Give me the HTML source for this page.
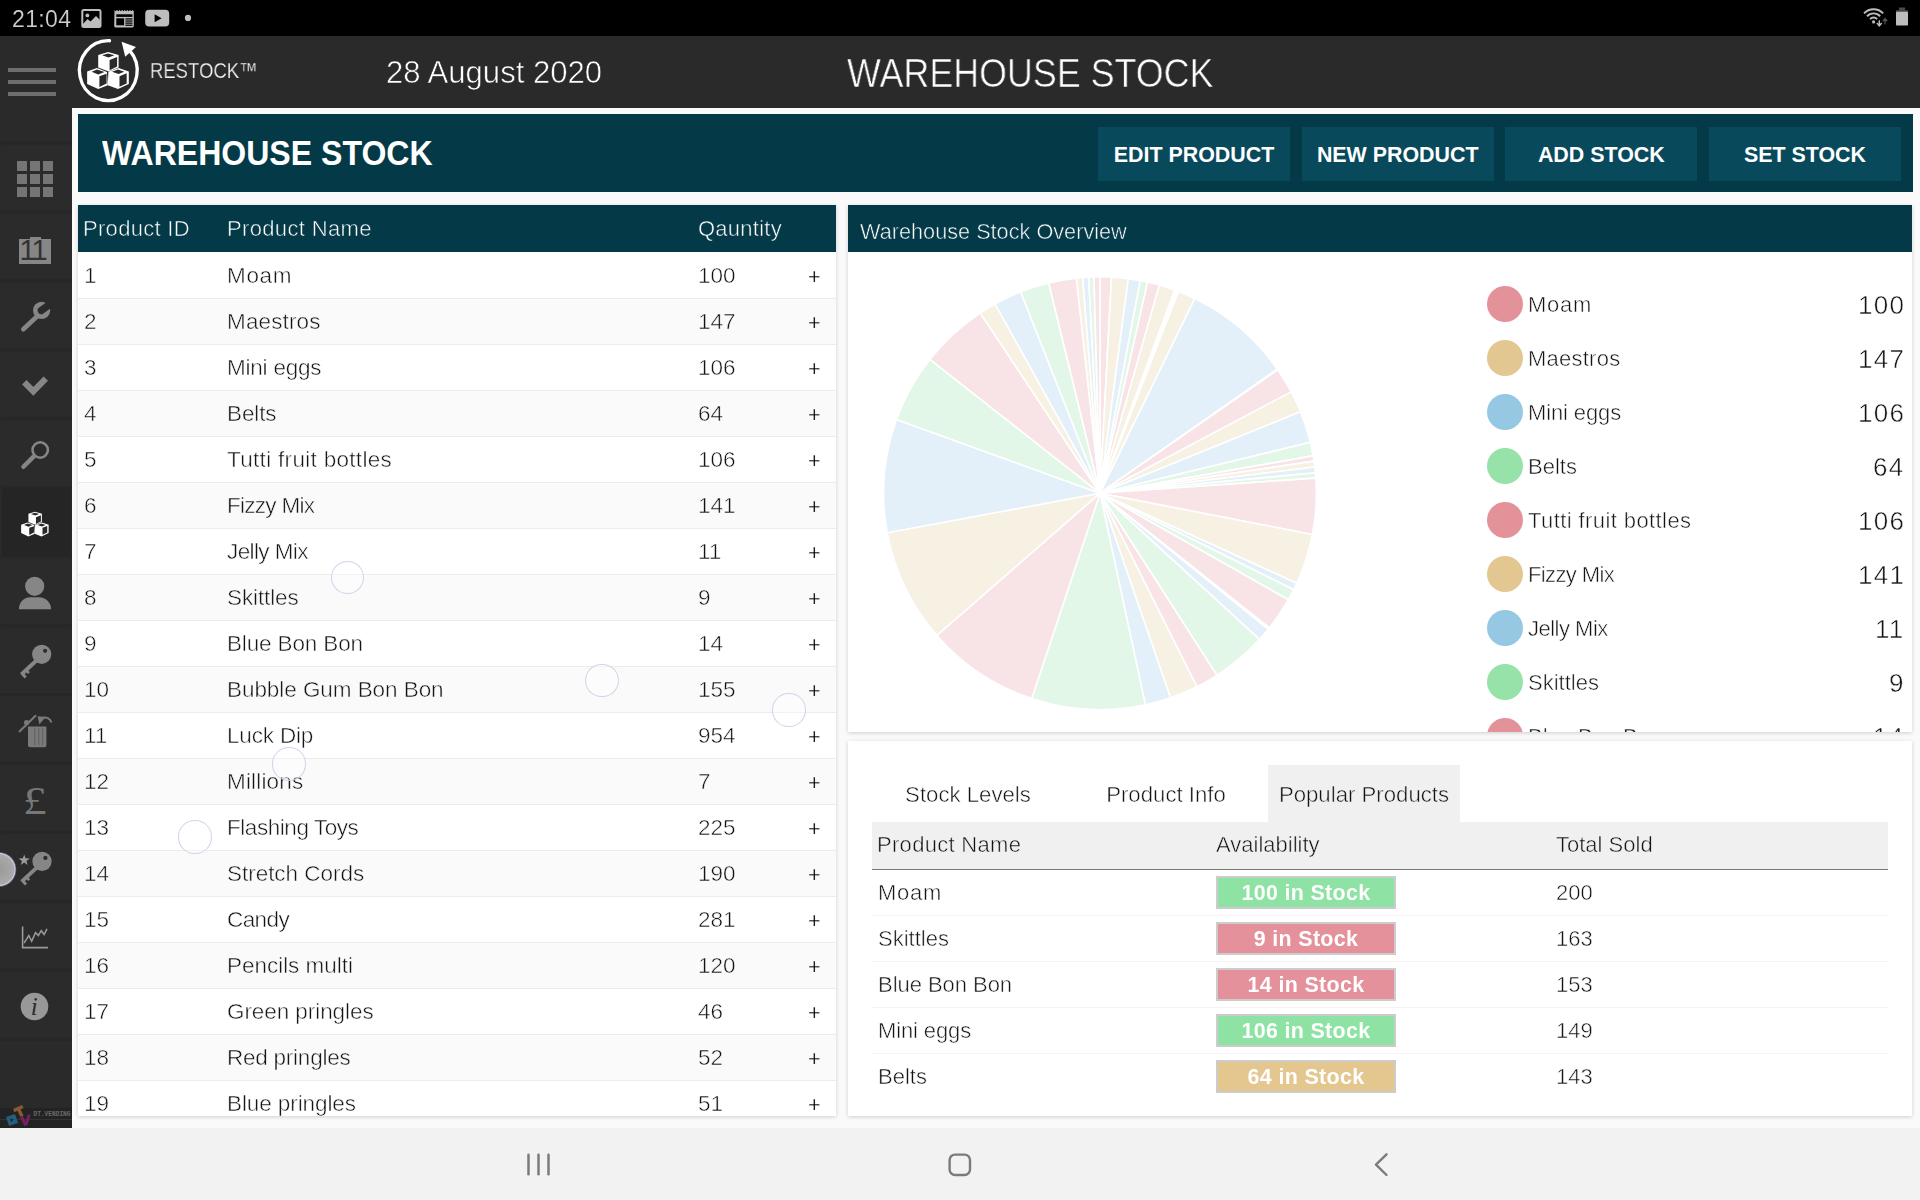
<!DOCTYPE html>
<html lang="en">
<head>
<meta charset="utf-8">
<title>RESTOCK - Warehouse Stock</title>
<style>
*{box-sizing:border-box;margin:0;padding:0}
html,body{width:1920px;height:1200px;overflow:hidden;background:#fafafa;font-family:"Liberation Sans",sans-serif;color:#484848}
.abs{position:absolute}
#statusbar{position:absolute;left:0;top:0;width:1920px;height:36px;background:#000;color:#cfcfcf}
#statusbar .time{position:absolute;left:11.7px;top:5.6px;font-size:23px;line-height:26px;letter-spacing:.35px}
#header{position:absolute;left:0;top:36px;width:1920px;height:72px;background:#2a2a2a;color:#fff}
#sidebar{position:absolute;left:0;top:108px;width:72px;height:1020px;background:#2a2a2a}
#navbar{position:absolute;left:0;top:1128px;width:1920px;height:72px;background:#f2f2f2}
#brand{position:absolute;left:150px;top:22.7px;font-size:21.5px;line-height:24px;color:#f4f4f4;transform-origin:0 50%;transform:scaleX(.86);white-space:nowrap}
#date{position:absolute;left:386px;top:19px;font-size:31.1px;line-height:36px;color:#fff;white-space:nowrap}
#htitle{position:absolute;left:847px;top:13.8px;font-size:40.5px;line-height:46px;color:#fff;transform-origin:0 50%;transform:scaleX(.885);white-space:nowrap}
#titlebar{position:absolute;left:78px;top:114px;width:1835px;height:78px;background:#043a48;color:#fff}
#titlebar h1{position:absolute;left:24px;top:19px;font-size:35.3px;line-height:40px;font-weight:bold;transform-origin:0 50%;transform:scaleX(.908);white-space:nowrap}
.btn{position:absolute;top:13px;width:192px;height:54px;background:#084a5b;color:#fff;font-weight:bold;font-size:21.4px;line-height:56px;text-align:center}
.panel{position:absolute;background:#fff;box-shadow:0 1px 4px rgba(0,0,0,.18);overflow:hidden}
.phead{position:absolute;left:0;top:0;width:100%;height:47px;background:#043a48;color:#fff;font-size:22px}
#stock .row{position:absolute;left:0;width:758px;height:46px;border-bottom:1px solid #ececec;font-size:22.5px;line-height:45px;margin-top:1px}
#stock .row.alt{background:#fafafa}
#stock .row span{position:absolute;top:0;white-space:nowrap}
.c1{left:6px}.c2{left:149.2px}.c3{left:620px}.c4{left:730.3px;color:#111;font-size:21.5px;margin-top:2px}
.phead span{position:absolute;white-space:nowrap;line-height:47px}

.lg{position:absolute;left:638.7px;width:420px;height:54px;font-size:22px;line-height:56px}
.lg i{position:absolute;left:0;top:9px;width:36px;height:36px;border-radius:50%}
.lg .ln{position:absolute;left:41.2px;top:0;white-space:nowrap}
.lg .lv{position:absolute;right:1.8px;top:0;font-size:26px;letter-spacing:1.3px}
.tab{position:absolute;top:24px;height:57px;line-height:59px;text-align:center;font-size:22.2px;white-space:nowrap}
.tab.act{background:#f0f0f0}
.thead{position:absolute;left:24px;top:81px;width:1016px;height:48px;background:#f0f0f0;border-bottom:1.5px solid #777;font-size:22px;line-height:46px}
.thead span{position:absolute;top:0;white-space:nowrap}
.prow{position:absolute;left:24px;width:1016px;height:46px;border-bottom:1px solid #f3f3f3;font-size:22px;line-height:45px}
.prow:last-child{border-bottom:none}
.prow span{position:absolute;top:0;white-space:nowrap}
.pn{left:5.6px}.ps{left:684px}
.badge{left:344px;top:6px !important;width:180px;height:33px;border:2px solid #ccc;color:#fff;font-weight:bold;font-size:21.4px;letter-spacing:.35px;line-height:31px;text-align:center}
.badge.g{background:#8ee2a4}.badge.r{background:#e4919b}.badge.t{background:#e4c78f}
.rip{position:absolute;width:33.4px;height:33.4px;border-radius:50%;border:1.6px solid rgba(200,205,232,.85);background:rgba(255,255,255,.35)}
.cal1{position:absolute;top:127px;font-size:29px;line-height:30px;color:#333}
#stock .row,.lg,.prow,.thead,.tab{-webkit-text-stroke:.5px #fff;color:#141414}
#stock .row.alt{-webkit-text-stroke-color:#fafafa}
.thead,.tab.act{-webkit-text-stroke-color:#f0f0f0}
.badge{-webkit-text-stroke:0}
#stock .row .c4{-webkit-text-stroke:.25px #fff;color:#000}
#stock .row span,.lg span,.prow span,.thead span,.tab{will-change:transform}
#date,#htitle{-webkit-text-stroke:.6px #2a2a2a;will-change:transform}
#brand{-webkit-text-stroke:.25px #2a2a2a;will-change:transform}
.phead span{-webkit-text-stroke:.55px #043a48;will-change:transform}
#statusbar .time{-webkit-text-stroke:.15px #000;will-change:transform}
</style>
</head>
<body>
<div id="statusbar"><span class="time">21:04</span></div>
<div id="header">
  <div id="brand">RESTOCK™</div>
  <div id="date">28 August 2020</div>
  <div id="htitle">WAREHOUSE STOCK</div>
</div>
<div id="sidebar"><svg class="abs" style="left:0;top:0" width="72" height="1020" viewBox="0 108 72 1020">
<rect x="2" y="144.50" width="69" height="65.94" fill="#2b2b2b"/>
<rect x="0" y="141.50" width="72" height="3" fill="#272727"/>
<rect x="2" y="213.44" width="69" height="65.94" fill="#2b2b2b"/>
<rect x="0" y="210.44" width="72" height="3" fill="#272727"/>
<rect x="2" y="282.38" width="69" height="65.94" fill="#2b2b2b"/>
<rect x="0" y="279.38" width="72" height="3" fill="#272727"/>
<rect x="2" y="351.32" width="69" height="65.94" fill="#2b2b2b"/>
<rect x="0" y="348.32" width="72" height="3" fill="#272727"/>
<rect x="2" y="420.26" width="69" height="65.94" fill="#2b2b2b"/>
<rect x="0" y="417.26" width="72" height="3" fill="#272727"/>
<rect x="2" y="489.20" width="69" height="65.94" fill="#252525"/>
<rect x="0" y="486.20" width="72" height="3" fill="#272727"/>
<rect x="2" y="558.14" width="69" height="65.94" fill="#2b2b2b"/>
<rect x="0" y="555.14" width="72" height="3" fill="#272727"/>
<rect x="2" y="627.08" width="69" height="65.94" fill="#2b2b2b"/>
<rect x="0" y="624.08" width="72" height="3" fill="#272727"/>
<rect x="2" y="696.02" width="69" height="65.94" fill="#2b2b2b"/>
<rect x="0" y="693.02" width="72" height="3" fill="#272727"/>
<rect x="2" y="764.96" width="69" height="65.94" fill="#2b2b2b"/>
<rect x="0" y="761.96" width="72" height="3" fill="#272727"/>
<rect x="2" y="833.90" width="69" height="65.94" fill="#2b2b2b"/>
<rect x="0" y="830.90" width="72" height="3" fill="#272727"/>
<rect x="2" y="902.84" width="69" height="65.94" fill="#2b2b2b"/>
<rect x="0" y="899.84" width="72" height="3" fill="#272727"/>
<rect x="2" y="971.78" width="69" height="65.94" fill="#2b2b2b"/>
<rect x="0" y="968.78" width="72" height="3" fill="#272727"/>
<rect x="0" y="1037.72" width="72" height="3" fill="#272727"/>
<rect x="17" y="161" width="10" height="10" fill="#757575"/>
<rect x="30" y="161" width="10" height="10" fill="#757575"/>
<rect x="43" y="161" width="10" height="10" fill="#757575"/>
<rect x="17" y="174" width="10" height="10" fill="#757575"/>
<rect x="30" y="174" width="10" height="10" fill="#757575"/>
<rect x="43" y="174" width="10" height="10" fill="#757575"/>
<rect x="17" y="187" width="10" height="10" fill="#757575"/>
<rect x="30" y="187" width="10" height="10" fill="#757575"/>
<rect x="43" y="187" width="10" height="10" fill="#757575"/>
<rect x="19" y="239" width="32" height="25" fill="#868686"/><rect x="30" y="237" width="11" height="3" fill="#868686"/>
<g fill="#868686" stroke="#868686"><line x1="23.3" y1="329.2" x2="37.5" y2="316" stroke-width="4.6" stroke-linecap="round"/><circle cx="41.6" cy="310.3" r="8.6" stroke="none"/></g>
<path d="M41.2 -3.6h12v7.2h-12a3.6 3.6 0 0 1 0-7.2z" fill="#2b2b2b" transform="translate(41.6 310.3) rotate(-36) translate(-41.6 0)"/>
<polyline points="24.3,382.3 33.3,391.3 45.8,378.6" fill="none" stroke="#868686" stroke-width="6.2"/>
<circle cx="40.2" cy="450" r="7.7" fill="none" stroke="#868686" stroke-width="2.6"/><line x1="33.6" y1="456.6" x2="23.4" y2="466.8" stroke="#868686" stroke-width="4.4" stroke-linecap="round"/>
<g transform="translate(34.9 524.1) scale(0.66) translate(-108 -70.5)"><use href="#cubes"/></g>
<circle cx="34.7" cy="586.3" r="9.6" fill="#868686"/><path d="M18.9 609.2c0-7 5-12 11-12h9.5c6 0 11.7 5 11.7 12z" fill="#868686"/>
<g transform="translate(41.7 654.3)"><circle cx="0" cy="0" r="9.6" fill="#868686"/><circle cx="3.4" cy="-3.5" r="2.1" fill="#2c2c2c"/><line x1="-5" y1="6" x2="-20.3" y2="20.2" stroke="#868686" stroke-width="4"/><line x1="-19.6" y1="19.2" x2="-16" y2="23.2" stroke="#868686" stroke-width="3"/><line x1="-15.6" y1="15.6" x2="-12.8" y2="18.8" stroke="#868686" stroke-width="2.6"/></g>
<path d="M28 726.5h18.4v18.7a2 2 0 0 1-2 2h-14.4a2 2 0 0 1-2-2z" fill="#7a7a7a"/>
<rect x="34.2" y="728" width="1.2" height="17" fill="#636363"/>
<rect x="38.2" y="728" width="1.2" height="17" fill="#636363"/>
<rect x="42" y="728" width="1.2" height="17" fill="#636363"/>
<line x1="19" y1="732" x2="36" y2="715.2" stroke="#7a7a7a" stroke-width="2"/><circle cx="26.6" cy="722.6" r="2.6" fill="#7a7a7a"/>
<path d="M51.4 722.5c-1.2-4.2-5-6-9.5-4.6" fill="none" stroke="#7a7a7a" stroke-width="2"/><path d="M37.6 716.2l8 .8-6.2 7.6z" fill="#7a7a7a"/>
<text x="0" y="0" text-anchor="middle" transform="translate(34.9 813.5) scale(1.18 1.02)" style="font-family:Liberation Serif,serif;font-size:40px" fill="#777">£</text>
<g transform="translate(42.0 861.4)"><circle cx="0" cy="0" r="9.6" fill="#868686"/><circle cx="3.4" cy="-3.5" r="2.1" fill="#2c2c2c"/><line x1="-5" y1="6" x2="-20.3" y2="20.2" stroke="#868686" stroke-width="4"/><line x1="-19.6" y1="19.2" x2="-16" y2="23.2" stroke="#868686" stroke-width="3"/><line x1="-15.6" y1="15.6" x2="-12.8" y2="18.8" stroke="#868686" stroke-width="2.6"/></g>
<polygon points="24.20,854.40 25.61,858.26 29.72,858.41 26.48,860.94 27.61,864.89 24.20,862.60 20.79,864.89 21.92,860.94 18.68,858.41 22.79,858.26" fill="#9a9a9a"/>
<polyline points="22.6,926.5 22.6,947.6 48,947.6" fill="none" stroke="#9a9a9a" stroke-width="1.6"/>
<polyline points="24,943.2 28.8,935.5 31.7,941.3 35.5,932.6 38.4,935.5 41.3,930.7 44.1,934.5 47,928.8" fill="none" stroke="#9a9a9a" stroke-width="1.5"/>
<circle cx="34.5" cy="1006.5" r="13.8" fill="#989898"/>
<text x="34.3" y="1014.5" text-anchor="middle" style="font-family:Liberation Serif,serif;font-style:italic;font-size:25px" fill="#2a2a2a">i</text>
<rect x="0" y="1108" width="72" height="20" fill="#232323"/><rect x="0" y="1119" width="72" height="1" fill="#333"/>
<path d="M6 1117l9-3 3 9-9 3z" fill="#23607e"/><path d="M10 1118.5l4 .8-3 3z" fill="#2a2a2a"/>
<path d="M13 1109l9-4 1.6 3-3 1.4 3 6-3.2 1.4-3-6-3 1.4z" fill="#8a5a2c"/>
<path d="M20 1117l3-1 2.6 6 2-7 3-1-3 11-3.4 1z" fill="#7a1f63"/>
<text x="33.5" y="1115.6" style="font-family:Liberation Mono,monospace;font-weight:bold;font-size:6.6px" fill="#6a6a6a" textLength="37" lengthAdjust="spacingAndGlyphs">DT.VENDING</text>
<defs><radialGradient id="blob" cx="50%" cy="50%" r="50%"><stop offset="0" stop-color="#9a9a9a"/><stop offset="0.82" stop-color="#aaaaaa"/><stop offset="0.9" stop-color="#c9cde6"/><stop offset="1" stop-color="#3a3d55" stop-opacity="0"/></radialGradient></defs>
<circle cx="-1" cy="869.5" r="18" fill="url(#blob)"/>
</svg>
<span class="cal1" style="left:19.6px">1</span><span class="cal1" style="left:31.4px">1</span></div>
<div id="titlebar">
  <h1>WAREHOUSE STOCK</h1>
  <div class="btn" style="left:1020px">EDIT PRODUCT</div>
  <div class="btn" style="left:1223.7px">NEW PRODUCT</div>
  <div class="btn" style="left:1427.3px">ADD STOCK</div>
  <div class="btn" style="left:1631px">SET STOCK</div>
</div>
<div id="stock" class="panel" style="left:78px;top:205px;width:758px;height:911px">
  <div class="phead"><span style="left:4.8px;letter-spacing:.3px">Product ID</span><span style="left:148.6px;letter-spacing:.35px">Product Name</span><span style="left:619.6px;letter-spacing:.25px">Qauntity</span></div>
  <div class="row" style="top:47px"><span class="c1">1</span><span class="c2" style="letter-spacing:0.67px">Moam</span><span class="c3">100</span><span class="c4">+</span></div>
  <div class="row alt" style="top:93px"><span class="c1">2</span><span class="c2" style="letter-spacing:0.14px">Maestros</span><span class="c3">147</span><span class="c4">+</span></div>
  <div class="row" style="top:139px"><span class="c1">3</span><span class="c2" style="letter-spacing:-0.22px">Mini eggs</span><span class="c3">106</span><span class="c4">+</span></div>
  <div class="row alt" style="top:185px"><span class="c1">4</span><span class="c2" style="letter-spacing:-0.10px">Belts</span><span class="c3">64</span><span class="c4">+</span></div>
  <div class="row" style="top:231px"><span class="c1">5</span><span class="c2" style="letter-spacing:0.31px">Tutti fruit bottles</span><span class="c3">106</span><span class="c4">+</span></div>
  <div class="row alt" style="top:277px"><span class="c1">6</span><span class="c2" style="letter-spacing:-0.72px">Fizzy Mix</span><span class="c3">141</span><span class="c4">+</span></div>
  <div class="row" style="top:323px"><span class="c1">7</span><span class="c2" style="letter-spacing:-0.60px">Jelly Mix</span><span class="c3">11</span><span class="c4">+</span></div>
  <div class="row alt" style="top:369px"><span class="c1">8</span><span class="c2" style="letter-spacing:-0.11px">Skittles</span><span class="c3">9</span><span class="c4">+</span></div>
  <div class="row" style="top:415px"><span class="c1">9</span><span class="c2" style="letter-spacing:-0.14px">Blue Bon Bon</span><span class="c3">14</span><span class="c4">+</span></div>
  <div class="row alt" style="top:461px"><span class="c1">10</span><span class="c2" style="letter-spacing:-0.06px">Bubble Gum Bon Bon</span><span class="c3">155</span><span class="c4">+</span></div>
  <div class="row" style="top:507px"><span class="c1">11</span><span class="c2" style="letter-spacing:-0.17px">Luck Dip</span><span class="c3">954</span><span class="c4">+</span></div>
  <div class="row alt" style="top:553px"><span class="c1">12</span><span class="c2" style="letter-spacing:0.17px">Millions</span><span class="c3">7</span><span class="c4">+</span></div>
  <div class="row" style="top:599px"><span class="c1">13</span><span class="c2" style="letter-spacing:-0.45px">Flashing Toys</span><span class="c3">225</span><span class="c4">+</span></div>
  <div class="row alt" style="top:645px"><span class="c1">14</span><span class="c2" style="letter-spacing:-0.03px">Stretch Cords</span><span class="c3">190</span><span class="c4">+</span></div>
  <div class="row" style="top:691px"><span class="c1">15</span><span class="c2" style="letter-spacing:-0.60px">Candy</span><span class="c3">281</span><span class="c4">+</span></div>
  <div class="row alt" style="top:737px"><span class="c1">16</span><span class="c2" style="letter-spacing:-0.03px">Pencils multi</span><span class="c3">120</span><span class="c4">+</span></div>
  <div class="row" style="top:783px"><span class="c1">17</span><span class="c2" style="letter-spacing:-0.07px">Green pringles</span><span class="c3">46</span><span class="c4">+</span></div>
  <div class="row alt" style="top:829px"><span class="c1">18</span><span class="c2" style="letter-spacing:-0.24px">Red pringles</span><span class="c3">52</span><span class="c4">+</span></div>
  <div class="row" style="top:875px"><span class="c1">19</span><span class="c2" style="letter-spacing:-0.09px">Blue pringles</span><span class="c3">51</span><span class="c4">+</span></div>
</div>
<div id="overview" class="panel" style="left:848px;top:205px;width:1064px;height:527px">
  <div class="phead"><span style="left:12px;top:3px;font-size:21.7px">Warehouse Stock Overview</span></div>
  <svg class="abs" style="left:0;top:47px" width="520" height="479" viewBox="0 47 520 479"><g stroke="#fff" stroke-width="1.6" stroke-linejoin="bevel"><path d="M252.0 288.2L252.00 71.80A216 216 0 0 1 263.49 72.11Z" fill="#f8e3e6"/><path d="M252.0 288.2L263.49 72.11A216 216 0 0 1 280.32 73.66Z" fill="#f7f1e3"/><path d="M252.0 288.2L280.32 73.66A216 216 0 0 1 292.35 75.60Z" fill="#e3f0f9"/><path d="M252.0 288.2L292.35 75.60A216 216 0 0 1 299.56 77.09Z" fill="#e3f7e8"/><path d="M252.0 288.2L299.56 77.09A216 216 0 0 1 311.37 80.10Z" fill="#f8e3e6"/><path d="M252.0 288.2L311.37 80.10A216 216 0 0 1 326.77 85.13Z" fill="#f7f1e3"/><path d="M252.0 288.2L326.77 85.13A216 216 0 0 1 327.96 85.57Z" fill="#e3f0f9"/><path d="M252.0 288.2L327.96 85.57A216 216 0 0 1 328.93 85.94Z" fill="#e3f7e8"/><path d="M252.0 288.2L328.93 85.94A216 216 0 0 1 330.43 86.51Z" fill="#f8e3e6"/><path d="M252.0 288.2L330.43 86.51A216 216 0 0 1 346.76 93.65Z" fill="#f7f1e3"/><path d="M252.0 288.2L346.76 93.65A216 216 0 0 1 429.29 164.12Z" fill="#e3f0f9"/><path d="M252.0 288.2L429.29 164.12A216 216 0 0 1 429.75 164.78Z" fill="#e3f7e8"/><path d="M252.0 288.2L429.75 164.78A216 216 0 0 1 443.20 186.86Z" fill="#f8e3e6"/><path d="M252.0 288.2L443.20 186.86A216 216 0 0 1 452.44 206.64Z" fill="#f7f1e3"/><path d="M252.0 288.2L452.44 206.64A216 216 0 0 1 462.35 237.37Z" fill="#e3f0f9"/><path d="M252.0 288.2L462.35 237.37A216 216 0 0 1 465.16 250.87Z" fill="#e3f7e8"/><path d="M252.0 288.2L465.16 250.87A216 216 0 0 1 466.01 256.09Z" fill="#f8e3e6"/><path d="M252.0 288.2L466.01 256.09A216 216 0 0 1 466.81 262.02Z" fill="#f7f1e3"/><path d="M252.0 288.2L466.81 262.02A216 216 0 0 1 467.44 267.85Z" fill="#e3f0f9"/><path d="M252.0 288.2L467.44 267.85A216 216 0 0 1 467.87 273.10Z" fill="#e3f7e8"/><path d="M252.0 288.2L467.87 273.10A216 216 0 0 1 464.42 329.49Z" fill="#f8e3e6"/><path d="M252.0 288.2L464.42 329.49A216 216 0 0 1 448.76 378.28Z" fill="#f7f1e3"/><path d="M252.0 288.2L448.76 378.28A216 216 0 0 1 445.66 384.76Z" fill="#e3f0f9"/><path d="M252.0 288.2L445.66 384.76A216 216 0 0 1 440.34 394.76Z" fill="#e3f7e8"/><path d="M252.0 288.2L440.34 394.76A216 216 0 0 1 421.36 422.91Z" fill="#f8e3e6"/><path d="M252.0 288.2L421.36 422.91A216 216 0 0 1 420.17 424.38Z" fill="#f7f1e3"/><path d="M252.0 288.2L420.17 424.38A216 216 0 0 1 411.55 434.40Z" fill="#e3f0f9"/><path d="M252.0 288.2L411.55 434.40A216 216 0 0 1 368.91 470.30Z" fill="#e3f7e8"/><path d="M252.0 288.2L368.91 470.30A216 216 0 0 1 348.90 481.69Z" fill="#f8e3e6"/><path d="M252.0 288.2L348.90 481.69A216 216 0 0 1 322.45 492.81Z" fill="#f7f1e3"/><path d="M252.0 288.2L322.45 492.81A216 216 0 0 1 297.36 499.79Z" fill="#e3f0f9"/><path d="M252.0 288.2L297.36 499.79A216 216 0 0 1 183.69 493.54Z" fill="#e3f7e8"/><path d="M252.0 288.2L183.69 493.54A216 216 0 0 1 88.93 430.46Z" fill="#f8e3e6"/><path d="M252.0 288.2L88.93 430.46A216 216 0 0 1 39.26 327.82Z" fill="#f7f1e3"/><path d="M252.0 288.2L39.26 327.82A216 216 0 0 1 48.52 214.54Z" fill="#e3f0f9"/><path d="M252.0 288.2L48.52 214.54A216 216 0 0 1 81.94 154.38Z" fill="#e3f7e8"/><path d="M252.0 288.2L81.94 154.38A216 216 0 0 1 132.25 107.96Z" fill="#f8e3e6"/><path d="M252.0 288.2L132.25 107.96A216 216 0 0 1 147.09 98.93Z" fill="#f7f1e3"/><path d="M252.0 288.2L147.09 98.93A216 216 0 0 1 172.69 86.86Z" fill="#e3f0f9"/><path d="M252.0 288.2L172.69 86.86A216 216 0 0 1 200.75 77.96Z" fill="#e3f7e8"/><path d="M252.0 288.2L200.75 77.96A216 216 0 0 1 228.44 73.09Z" fill="#f8e3e6"/><path d="M252.0 288.2L228.44 73.09A216 216 0 0 1 234.64 72.50Z" fill="#f7f1e3"/><path d="M252.0 288.2L234.64 72.50A216 216 0 0 1 240.67 72.10Z" fill="#e3f0f9"/><path d="M252.0 288.2L240.67 72.10A216 216 0 0 1 245.96 71.88Z" fill="#e3f7e8"/><path d="M252.0 288.2L245.96 71.88A216 216 0 0 1 252.00 71.80Z" fill="#f8e3e6"/></g></svg>
  <div class="lg" style="top:72px"><i style="background:#e4929a"></i><span class="ln" style="letter-spacing:0.77px">Moam</span><span class="lv">100</span></div>
  <div class="lg" style="top:126px"><i style="background:#e2c791"></i><span class="ln" style="letter-spacing:0.24px">Maestros</span><span class="lv">147</span></div>
  <div class="lg" style="top:180px"><i style="background:#96c8e4"></i><span class="ln" style="letter-spacing:-0.12px">Mini eggs</span><span class="lv">106</span></div>
  <div class="lg" style="top:234px"><i style="background:#96e2a8"></i><span class="ln">Belts</span><span class="lv">64</span></div>
  <div class="lg" style="top:288px"><i style="background:#e4929a"></i><span class="ln" style="letter-spacing:0.41px">Tutti fruit bottles</span><span class="lv">106</span></div>
  <div class="lg" style="top:342px"><i style="background:#e2c791"></i><span class="ln" style="letter-spacing:-0.62px">Fizzy Mix</span><span class="lv">141</span></div>
  <div class="lg" style="top:396px"><i style="background:#96c8e4"></i><span class="ln" style="letter-spacing:-0.50px">Jelly Mix</span><span class="lv">11</span></div>
  <div class="lg" style="top:450px"><i style="background:#96e2a8"></i><span class="ln">Skittles</span><span class="lv">9</span></div>
  <div class="lg" style="top:504px"><i style="background:#e4929a"></i><span class="ln" style="letter-spacing:-0.04px">Blue Bon Bon</span><span class="lv">14</span></div>
</div>
<div id="popular" class="panel" style="left:848px;top:741px;width:1064px;height:375px">
  <div class="tab" style="left:24px;width:192px">Stock Levels</div>
  <div class="tab" style="left:222px;width:192px">Product Info</div>
  <div class="tab act" style="left:420px;width:192px">Popular Products</div>
  <div class="thead"><span style="left:5.4px;letter-spacing:.3px">Product Name</span><span style="left:344px">Availability</span><span style="left:684px">Total Sold</span></div>
  <div class="prow" style="top:129px"><span class="pn" style="letter-spacing:0.77px">Moam</span><span class="badge g">100 in Stock</span><span class="ps">200</span></div>
  <div class="prow" style="top:175px"><span class="pn">Skittles</span><span class="badge r">9 in Stock</span><span class="ps">163</span></div>
  <div class="prow" style="top:221px"><span class="pn" style="letter-spacing:-0.04px">Blue Bon Bon</span><span class="badge r">14 in Stock</span><span class="ps">153</span></div>
  <div class="prow" style="top:267px"><span class="pn" style="letter-spacing:-0.12px">Mini eggs</span><span class="badge g">106 in Stock</span><span class="ps">149</span></div>
  <div class="prow" style="top:313px"><span class="pn">Belts</span><span class="badge t">64 in Stock</span><span class="ps">143</span></div>
</div>
<div id="navbar"></div>
<svg class="abs" style="left:0;top:0" width="1920" height="108" viewBox="0 0 1920 108">
<defs><g id="cubes">
<polygon points="98.2,54.9 108.1,51.9 118.6,54.9 118.6,67.5 108.7,71.4 98.2,67.5" fill="#fff"/><polygon points="102.1,55.2 108.1,53.4 114.4,55.2 108.4,57.6" fill="#2a2a2a"/><polygon points="109.6,60.0 117.1,57.0 117.1,66.6 109.6,70.2" fill="#2a2a2a"/>
<polygon points="87.1,71.4 97.0,68.1 106.9,72.0 107.8,85.2 98.2,89.1 87.1,84.0" fill="#fff"/><polygon points="91.6,71.7 97.0,69.6 104.5,72.0 98.2,74.4" fill="#2a2a2a"/><polygon points="99.4,76.2 106.6,73.8 106.6,83.4 99.4,87.0" fill="#2a2a2a"/>
<polygon points="108.4,71.7 118.6,68.1 128.8,71.4 128.8,84.0 118.0,89.1 107.8,85.2" fill="#fff"/><polygon points="112.0,71.7 118.0,69.6 124.3,71.7 118.6,74.1" fill="#2a2a2a"/><polygon points="119.5,76.2 126.7,73.2 126.7,83.4 119.5,86.7" fill="#2a2a2a"/>
</g></defs>
<rect x="82.3" y="10.1" width="18.2" height="17" rx="1.5" fill="none" stroke="#bdbdbd" stroke-width="2"/>
<path d="M83 24l4.5-5 3 2.6 5.5-5.6 4 4v6.5h-17z" fill="#bdbdbd"/><circle cx="87.4" cy="15.4" r="1.9" fill="#bdbdbd"/>
<path d="M114.5 10l1.2 1.2 1.3-1.2 1.3 1.2 1.3-1.2 1.3 1.2 1.3-1.2 1.3 1.2 1.3-1.2 1.3 1.2 1.3-1.2 1.3 1.2 1.3-1.2 1.3 1.2 1.3-1.2 1.2 1.2V26a1.4 1.4 0 0 1-1.4 1.4h-16.8a1.4 1.4 0 0 1-1.4-1.4z" fill="#bdbdbd"/>
<rect x="116.3" y="14.3" width="16.2" height="2.6" fill="#000"/><rect x="116.3" y="18.3" width="7.8" height="7" fill="#000"/>
<rect x="125.4" y="18.3" width="7.1" height="1.25" fill="#000"/>
<rect x="125.4" y="20.4" width="7.1" height="1.25" fill="#000"/>
<rect x="125.4" y="22.5" width="7.1" height="1.25" fill="#000"/>
<rect x="125.4" y="24.6" width="7.1" height="1.25" fill="#000"/>
<rect x="145.2" y="9.8" width="24" height="16.8" rx="4" fill="#bdbdbd"/><path d="M154.6 14.2l7 4-7 4z" fill="#000"/>
<circle cx="188" cy="17.9" r="3.1" fill="#bdbdbd"/>
<path d="M1870.02 19.06A4.9 4.9 0 0 1 1877.18 19.06" fill="none" stroke="#bdbdbd" stroke-width="1.9"/>
<path d="M1867.02 16.26A9.0 9.0 0 0 1 1880.18 16.26" fill="none" stroke="#bdbdbd" stroke-width="1.9"/>
<path d="M1864.02 13.47A13.1 13.1 0 0 1 1883.18 13.47" fill="none" stroke="#bdbdbd" stroke-width="1.9"/>
<circle cx="1873.6" cy="21.9" r="1.6" fill="#bdbdbd"/>
<path d="M1879.3 20.2v5.4m-2.4-2.6l2.4 2.8 2.4-2.8" fill="none" stroke="#bdbdbd" stroke-width="1.4"/>
<path d="M1885 24.6v-4h-1.8l1.8-2.2 1.8 2.2h-1.8" fill="#555" stroke="#555" stroke-width="1.1"/>
<rect x="1899" y="7.5" width="6" height="3" fill="#4a4a4a"/><rect x="1896" y="10.2" width="12" height="1.8" fill="#4a4a4a"/><rect x="1896" y="11.8" width="12" height="13.8" rx="0.8" fill="#bdbdbd"/>
<rect x="8" y="68" width="48" height="4" fill="#6e6e6e"/>
<rect x="8" y="80" width="48" height="4" fill="#6e6e6e"/>
<rect x="8" y="92" width="48" height="4" fill="#6e6e6e"/>
<path d="M109.56 40.73A28.9 29.9 0 1 0 129.78 50.59" fill="none" stroke="#fff" stroke-width="3.3" stroke-linecap="round"/>
<polygon points="121.6,41.7 136.0,47.1 125.2,56.7" fill="#fff"/>
<use href="#cubes"/>
</svg>
<svg class="abs" style="left:0;top:1128px" width="1920" height="72" viewBox="0 1128 1920 72">
<rect x="527.25" y="1153.5" width="2.5" height="22" rx="1.2" fill="#7b7b7b"/>
<rect x="537.25" y="1153.5" width="2.5" height="22" rx="1.2" fill="#7b7b7b"/>
<rect x="547.25" y="1153.5" width="2.5" height="22" rx="1.2" fill="#7b7b7b"/>
<rect x="949.6" y="1154.6" width="20.4" height="20.4" rx="5.5" fill="none" stroke="#7b7b7b" stroke-width="2.4"/>
<polyline points="1386.5,1154.3 1376,1164.6 1386.5,1175" fill="none" stroke="#7b7b7b" stroke-width="2.4" stroke-linecap="round" stroke-linejoin="round"/>
</svg>
<div class="rip" style="left:330.5px;top:560.6px"></div>
<div class="rip" style="left:585.3px;top:663.8px"></div>
<div class="rip" style="left:772.3px;top:693.3px"></div>
<div class="rip" style="left:272.3px;top:747.3px"></div>
<div class="rip" style="left:178.3px;top:820.3px"></div>
</body>
</html>
